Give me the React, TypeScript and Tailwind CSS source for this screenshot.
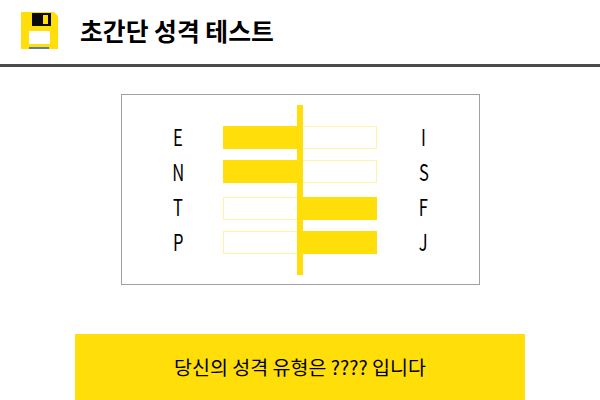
const YELLOW = "bg-[#ffde0a]";
const EMPTY = "border border-[#fff3a8]";

const rows = [
  { left: "E", right: "I", leftOn: true, gap: "mt-0", lift: "-mt-[1px]" },
  { left: "N", right: "S", leftOn: true, gap: "mt-[11px]", lift: "mt-0" },
  { left: "T", right: "F", leftOn: false, gap: "mt-[14px]", lift: "-mt-[2px]" },
  { left: "P", right: "J", leftOn: false, gap: "mt-[11px]", lift: "-mt-[1px]" },
];

const FloppyIcon = () => (
  <svg width="37" height="37" viewBox="0 0 37 37" className="block shrink-0">
    <path d="M0 0H33L37 4V37H0Z" fill="#ffde0a" />
    <rect x="11" y="1" width="19" height="13" fill="#0a0a0a" />
    <rect x="22" y="3" width="5" height="9" fill="#ffde0a" />
    <rect x="8" y="19" width="21" height="13" fill="#ffffff" />
    <rect x="8" y="35" width="20" height="2" fill="#5f7f9f" />
  </svg>
);

const Letter = ({ children }: { children: string }) => (
  <span className="inline-block scale-x-[0.72] text-[23px] leading-[23px] font-normal">{children}</span>
);

const App = () => {
  return (
    <div className="w-[600px] h-[400px] overflow-hidden bg-white text-black font-['Noto_Sans_CJK_KR','Noto_Sans',sans-serif]">
      <header className="h-[67px] border-b-[3px] border-[#4a4a4a] flex items-center pl-[21px] pb-[4px]">
        <FloppyIcon />
        <h1 className="ml-[22px] text-[24.8px] font-bold leading-none">초간단 성격 테스트</h1>
      </header>

      <section className="relative w-[359px] h-[191px] mx-auto mt-[27px] border border-[#a0a0a0] pt-[31px]">
        <div className="absolute left-[175px] top-[10px] w-[6px] h-[170px] bg-[#ffde0a]" />
        {rows.map((row) => (
          <div key={row.left} className={`flex h-[23px] ${row.gap}`}>
            <div className={`w-[101px] h-[23px] pl-[12px] text-center ${row.lift}`}>
              <Letter>{row.left}</Letter>
            </div>
            <div className={`w-[78px] ${row.leftOn ? YELLOW : EMPTY}`} />
            <div className={`w-[76px] ${row.leftOn ? EMPTY : YELLOW}`} />
            <div className={`flex-1 h-[23px] text-center pr-[8px] ${row.lift}`}>
              <Letter>{row.right}</Letter>
            </div>
          </div>
        ))}
      </section>

      <div className={`w-[450px] h-[66px] mx-auto mt-[49px] flex items-center justify-center text-[19.5px] ${YELLOW}`}>
        당신의 성격 유형은 ???? 입니다
      </div>
    </div>
  );
};

export default App;
